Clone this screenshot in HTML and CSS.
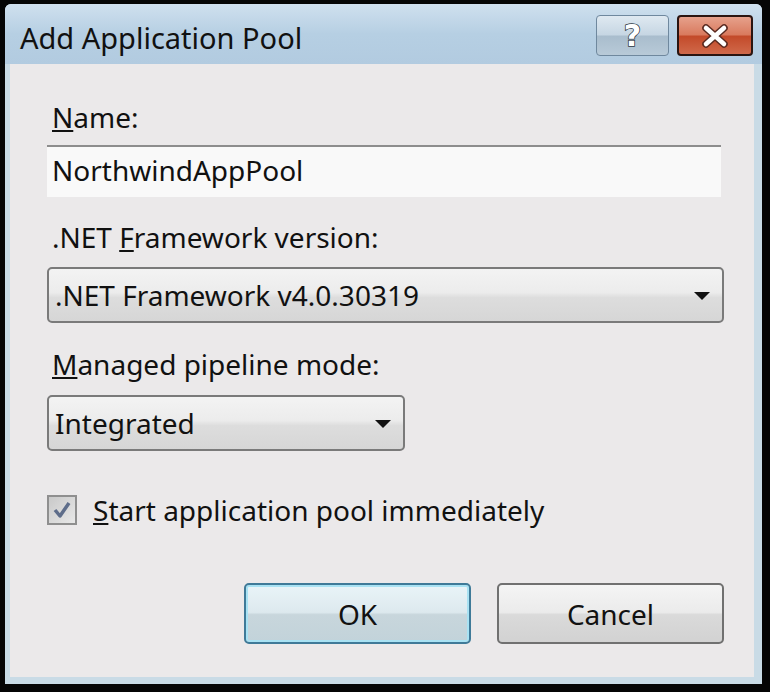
FILE: index.html
```html
<!DOCTYPE html>
<html>
<head>
<meta charset="utf-8">
<link rel="stylesheet" href="styles.css">
</head>
<body>
<div class="window">
  <div class="titlebar">
    <div class="title">Add Application Pool</div>
    <div class="caption-buttons">
      <div class="cap-btn help"><span class="qmark">?</span></div>
      <div class="cap-btn close">
        <svg width="30" height="24" viewBox="0 0 30 24"><path d="M6 4 L24 20 M24 4 L6 20" stroke="#5a2a20" stroke-width="7.5" stroke-linecap="round"/><path d="M6 4 L24 20 M24 4 L6 20" stroke="#ffffff" stroke-width="4.5" stroke-linecap="round"/></svg>
      </div>
    </div>
  </div>
  <div class="content">
    <div class="label"><u>N</u>ame:</div>
    <div class="textbox">NorthwindAppPool</div>
    <div class="label l2">.NET <u>F</u>ramework version:</div>
    <div class="select wide"><span>.NET Framework v4.0.30319</span><span class="arrow"></span></div>
    <div class="label l3"><u>M</u>anaged pipeline mode:</div>
    <div class="select narrow"><span>Integrated</span><span class="arrow"></span></div>
    <div class="check-row">
      <div class="checkbox">
        <svg width="22" height="22" viewBox="0 0 22 22"><path d="M4 11 L9 17 L18 4" fill="none" stroke="#5e6d8a" stroke-width="3.5" stroke-linejoin="round"/></svg>
      </div>
      <div class="check-label"><u>S</u>tart application pool immediately</div>
    </div>
    <div class="buttons">
      <div class="btn ok">OK</div>
      <div class="btn">Cancel</div>
    </div>
  </div>
</div>
</body>
</html>
```
FILE: styles.css
```css
html, body {
  margin: 0;
  padding: 0;
  background: #050505;
  width: 770px;
  height: 692px;
  overflow: hidden;
  font-family: "Noto Sans", "Open Sans", sans-serif;
}
.window {
  position: absolute;
  left: 5px;
  top: 4px;
  width: 757px;
  height: 680px;
  background: #c9dbe6;
  border-radius: 6px 6px 0 0;
  box-sizing: border-box;
  padding: 0 8px 7px 5px;
  display: flex;
  flex-direction: column;
}
.titlebar {
  height: 60px;
  display: flex;
  align-items: flex-start;
  justify-content: space-between;
  background: linear-gradient(#cfe0ee, #b6cfe3 50%, #b2cbe0);
  margin: 0 -8px 0 -5px;
  padding: 0 8px 0 15px;
  border-radius: 6px 6px 0 0;
}
.title {
  font-size: 29px;
  line-height: 36px;
  color: #111;
  margin-top: 16px;
}
.caption-buttons {
  display: flex;
  gap: 8px;
  margin-top: 11px;
  margin-right: 1px;
}
.cap-btn {
  height: 41px;
  box-sizing: border-box;
  border-radius: 4px;
  display: flex;
  align-items: center;
  justify-content: center;
}
.help {
  width: 73px;
  border: 1px solid #6f889e;
  background: linear-gradient(#dfe9f1, #c6d6e3 48%, #a9bdcd 52%, #b8cad8);
}
.qmark {
  font-family: "DejaVu Sans", sans-serif;
  font-size: 30px;
  font-weight: bold;
  line-height: 34px;
  color: #ffffff;
  -webkit-text-stroke: 1.5px #2c3640;
  paint-order: stroke fill;
}
.close {
  width: 76px;
  border: 2px solid #2a1410;
  background: linear-gradient(#e6a18c, #d97a5e 48%, #c34a2a 52%, #d0694a);
}
.content {
  flex: 1;
  background: #ebe9ea;
  padding: 36px 0 0 37px;
  display: flex;
  flex-direction: column;
  align-items: flex-start;
}
.label {
  font-size: 28px;
  color: #111;
  line-height: 34px;
  margin-left: 5px;
}
.l2 { margin-top: 23px; }
.l3 { margin-top: 24px; }
.textbox {
  margin-top: 11px;
  width: 674px;
  height: 52px;
  box-sizing: border-box;
  background: #f9f9f9;
  border-top: 2px solid #8d8d8d;
  font-size: 28px;
  line-height: 38px;
  color: #111;
  padding: 4px 0 0 5px;
}
.select {
  height: 56px;
  box-sizing: border-box;
  border: 2px solid #7a7a7a;
  border-radius: 5px;
  background: linear-gradient(#f3f3f3, #ececec 45%, #dddddd 55%, #d6d6d6);
  font-size: 28px;
  color: #111;
  display: flex;
  align-items: center;
  justify-content: space-between;
  padding: 0 12px 0 6px;
}
.wide { width: 677px; margin-top: 13px; }
.narrow { width: 358px; margin-top: 14px; }
.arrow {
  width: 0;
  height: 0;
  border-left: 8px solid transparent;
  border-right: 8px solid transparent;
  border-top: 8px solid #111;
  margin-top: 2px;
}
.check-row {
  margin-top: 44px;
  display: flex;
  align-items: center;
  gap: 16px;
}
.checkbox {
  width: 30px;
  height: 30px;
  box-sizing: border-box;
  border: 2px solid #8f8f8f;
  background: linear-gradient(135deg, #c9c9c9, #e8e8e8);
  display: flex;
  align-items: center;
  justify-content: center;
}
.check-label {
  font-size: 28px;
  line-height: 30px;
  color: #111;
}
.buttons {
  margin-top: 58px;
  align-self: flex-end;
  margin-right: 30px;
  display: flex;
  gap: 26px;
}
.btn {
  width: 227px;
  height: 61px;
  box-sizing: border-box;
  border: 2px solid #707070;
  border-radius: 5px;
  background: linear-gradient(#f4f4f4, #ebebeb 48%, #dadada 52%, #d2d2d2);
  font-size: 28px;
  color: #111;
  display: flex;
  align-items: center;
  justify-content: center;
}
.ok {
  border-color: #3f7a98;
  box-shadow: inset 0 0 0 2px #a9e2f3;
  background: linear-gradient(#e9f4f8, #dde9ee 48%, #c8d6dc 52%, #c2d3da);
}
```
